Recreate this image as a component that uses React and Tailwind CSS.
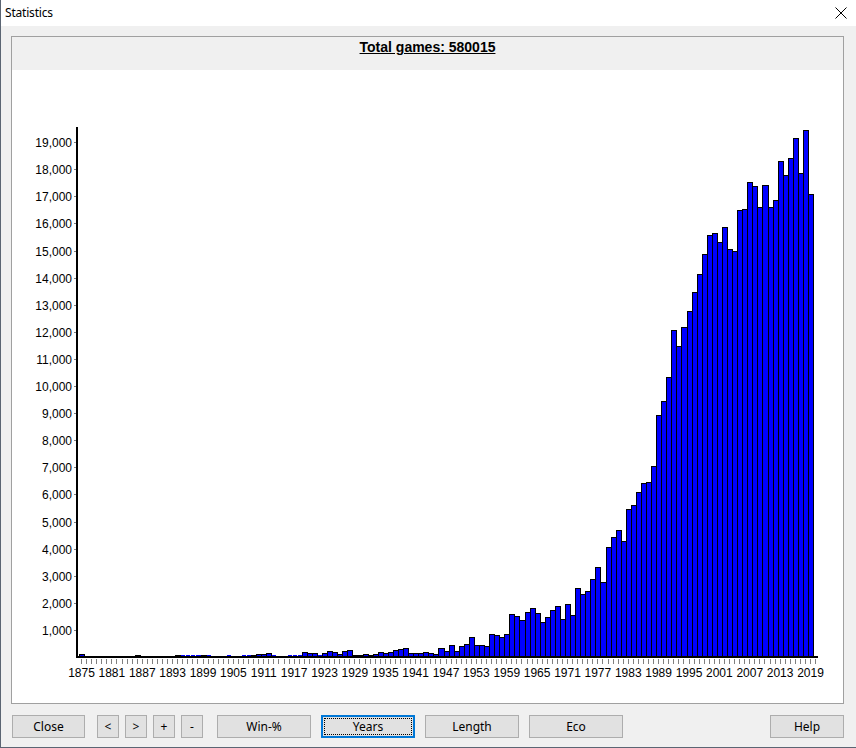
import React from "react";

// games per year, in thousands, 1875 .. 2019
const data = [
  // 1875-1884
  0.11, 0, 0, 0, 0, 0, 0, 0, 0, 0,
  // 1885-1894
  0, 0.06, 0, 0, 0, 0, 0, 0, 0, 0.06,
  // 1895-1904
  0.03, 0.03, 0.03, 0.03, 0.06, 0.03, 0, 0, 0, 0.03,
  // 1905-1914
  0, 0, 0.03, 0.03, 0.07, 0.11, 0.11, 0.15, 0.03, 0,
  // 1915-1924
  0, 0.03, 0.03, 0.03, 0.17, 0.14, 0.14, 0.05, 0.14, 0.21,
  // 1925-1934
  0.17, 0.1, 0.21, 0.25, 0.06, 0.06, 0.1, 0.06, 0.1, 0.17,
  // 1935-1944
  0.14, 0.17, 0.25, 0.28, 0.32, 0.14, 0.14, 0.14, 0.17, 0.14,
  // 1945-1954
  0.1, 0.32, 0.21, 0.43, 0.21, 0.39, 0.47, 0.73, 0.43, 0.43,
  // 1955-1964
  0.39, 0.84, 0.8, 0.73, 0.84, 1.57, 1.5, 1.35, 1.65, 1.8,
  // 1965-1974
  1.61, 1.28, 1.46, 1.72, 1.87, 1.39, 1.94, 1.54, 2.53, 2.32,
  // 1975-1984
  2.43, 2.87, 3.32, 2.76, 4.05, 4.42, 4.68, 4.28, 5.45, 5.6,
  // 1985-1994
  6.09, 6.42, 6.45, 7.04, 8.92, 9.44, 10.33, 12.06, 11.47, 12.17,
  // 1995-2004
  12.76, 13.47, 14.13, 14.87, 15.57, 15.64, 15.31, 15.88, 15.04, 14.98,
  // 2005-2014
  16.49, 16.53, 17.52, 17.37, 16.59, 17.41, 16.59, 16.86, 18.3, 17.79,
  // 2015-2019
  18.41, 19.15, 17.85, 19.44, 17.08,
];

const BASE = 657;
const PER_K = 27.1;
const X0 = 79;
const STEP = 5.0625;

function Chart() {
  const font = { fontFamily: '"Liberation Sans", Arial, sans-serif', fontSize: 12 };
  return (
    <svg width="831" height="633" shapeRendering="crispEdges" className="block">
      <g transform="translate(-12,-70)" style={font}>
        {data.map((v, i) => {
          const xl = Math.round(X0 + STEP * i);
          const xr = Math.round(X0 + STEP * (i + 1));
          const h = Math.round(v * PER_K);
          if (h === 0) return null;
          if (h <= 1)
            return <rect key={i} x={xl + 1} y={655} width={xr - xl - 1} height={1} fill="#0000ff" />;
          return (
            <rect
              key={i}
              x={xl + 0.5}
              y={BASE - h + 0.5}
              width={xr - xl}
              height={h}
              fill="#0000ff"
              stroke="#000"
              strokeWidth="1"
            />
          );
        })}

        {/* axes */}
        <rect x="76" y="127" width="2" height="531" fill="#000" />
        <rect x="76" y="656" width="742" height="2" fill="#000" />

        {/* y labels */}
        {Array.from({ length: 19 }, (_, k) => {
          const y = Math.round(BASE - PER_K * (k + 1));
          return (
            <g key={k}>
              <rect x="74" y={y} width="2" height="1" fill="#808080" />
              <text x="72" y={y + 4.5} textAnchor="end" fill="#000">
                {((k + 1) * 1000).toLocaleString("en-US")}
              </text>
            </g>
          );
        })}

        {/* x ticks */}
        {Array.from({ length: 146 }, (_, i) => (
          <rect key={i} x={Math.round(X0 + STEP * i + 2)} y="659" width="1" height="5" fill="#808080" />
        ))}

        {/* x labels */}
        {Array.from({ length: 25 }, (_, j) => (
          <text key={j} x={X0 + STEP * j * 6 + 2.5} y="677" textAnchor="middle" fill="#000">
            {1875 + j * 6}
          </text>
        ))}
      </g>
    </svg>
  );
}

function Btn({ children, w, focused, className = "" }) {
  if (focused) {
    return (
      <div
        className={`h-[23px] ${w} border-2 border-[#0078d7] bg-[#e1e1e1] p-[1px] ${className}`}
      >
        <div className="h-full w-full border border-dotted border-black flex items-center justify-center">
          {children}
        </div>
      </div>
    );
  }
  return (
    <div
      className={`h-[23px] ${w} border border-[#adadad] bg-[#e1e1e1] flex items-center justify-center ${className}`}
    >
      {children}
    </div>
  );
}

export default function App() {
  return (
    <div
      className="w-[856px] h-[748px] flex flex-col bg-[#f0f0f0] border-l border-b border-[#5b6573] text-black overflow-hidden"
      style={{ fontFamily: '"Noto Sans", "Liberation Sans", sans-serif' }}
    >
      <div className="h-[26px] bg-white flex items-center justify-between pl-[4px] pr-[9px] shrink-0">
        <span className="text-[12px] leading-none tracking-[-0.2px]">Statistics</span>
        <svg width="12" height="12" viewBox="0 0 12 12">
          <path d="M0.5 0.5 L11.5 11.5 M11.5 0.5 L0.5 11.5" stroke="#000" strokeWidth="1" />
        </svg>
      </div>

      <div className="pt-[10px] pl-[10px] pr-[12px] shrink-0">
        <div className="h-[668px] border border-[#a0a0a0] flex flex-col">
          <div className="h-[33px] flex justify-center pt-[2px] shrink-0">
            <span
              className="text-[14px] leading-[16px] font-bold underline"
              style={{ fontFamily: '"Liberation Sans", Arial, sans-serif' }}
            >
              Total games: 580015
            </span>
          </div>
          <div className="flex-1 bg-white">
            <Chart />
          </div>
        </div>
      </div>

      <div className="flex items-start pt-[11px] pl-[11px] pr-[12px] text-[12px]">
        <Btn w="w-[73px]">Close</Btn>
        <Btn w="w-[22px]" className="ml-[12px]">&lt;</Btn>
        <Btn w="w-[22px]" className="ml-[6px]">&gt;</Btn>
        <Btn w="w-[22px]" className="ml-[6px]">+</Btn>
        <Btn w="w-[22px]" className="ml-[6px]">-</Btn>
        <Btn w="w-[94px]" className="ml-[14px]">Win-%</Btn>
        <Btn w="w-[94px]" className="ml-[10px]" focused>Years</Btn>
        <Btn w="w-[94px]" className="ml-[10px]">Length</Btn>
        <Btn w="w-[94px]" className="ml-[10px]">Eco</Btn>
        <Btn w="w-[74px]" className="ml-auto">Help</Btn>
      </div>
    </div>
  );
}
